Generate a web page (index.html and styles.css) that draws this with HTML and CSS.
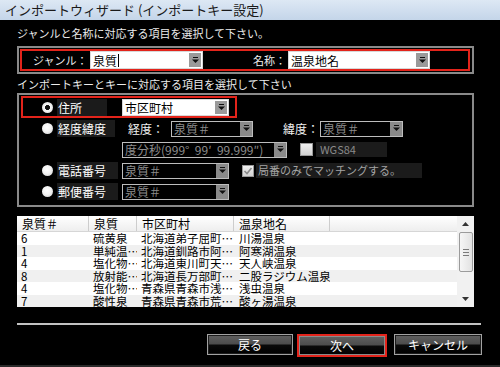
FILE: index.html
```html
<!DOCTYPE html>
<html lang="ja">
<head>
<meta charset="utf-8">
<title>インポートウィザード</title>
<link rel="stylesheet" href="styles.css">
</head>
<body>
<div class="window">
  <div class="titlebar">インポートウィザード (インポートキー設定)</div>
  <div class="main">
    <p class="caption cap1">ジャンルと名称に対応する項目を選択して下さい。</p>
    <div class="frame frame-top">
      <div class="hl">
        <span class="fld-label lbl-genre">ジャンル：</span>
        <div class="combo combo-white tall cw113">
          <span class="combo-text">泉質<span class="caret"></span></span>
          <span class="combo-btn"><svg viewBox="0 0 7 7" width="7" height="7"><rect x="1" y="0" width="5" height="1"/><path d="M0 2.5H7L3.5 6Z"/></svg></span>
        </div>
        <span class="fld-label lbl-name">名称：</span>
        <div class="combo combo-white tall cw142">
          <span class="combo-text">温泉地名</span>
          <span class="combo-btn"><svg viewBox="0 0 7 7" width="7" height="7"><rect x="1" y="0" width="5" height="1"/><path d="M0 2.5H7L3.5 6Z"/></svg></span>
        </div>
      </div>
    </div>
    <p class="caption cap2">インポートキーとキーに対応する項目を選択して下さい</p>
    <div class="frame group">
      <div class="opt first">
        <span class="radio on"></span>
        <span class="optcol"><span class="lbl w50">住所</span></span>
        <div class="combo combo-white cw107">
          <span class="combo-text">市区町村</span>
          <span class="combo-btn"><svg viewBox="0 0 7 7" width="7" height="7"><rect x="1" y="0" width="5" height="1"/><path d="M0 2.5H7L3.5 6Z"/></svg></span>
        </div>
      </div>
      <div class="opt">
        <span class="radio"></span>
        <span class="optcol"><span class="lbl w58">経度緯度</span></span>
        <span class="sub sub-lon">経度：</span>
        <div class="combo combo-dark cw82">
          <span class="combo-text">泉質＃</span>
          <span class="combo-btn"><svg viewBox="0 0 7 7" width="7" height="7"><rect x="1" y="0" width="5" height="1"/><path d="M0 2.5H7L3.5 6Z"/></svg></span>
        </div>
        <span class="sub sub-lat">緯度：</span>
        <div class="combo combo-dark cw83">
          <span class="combo-text">泉質＃</span>
          <span class="combo-btn"><svg viewBox="0 0 7 7" width="7" height="7"><rect x="1" y="0" width="5" height="1"/><path d="M0 2.5H7L3.5 6Z"/></svg></span>
        </div>
      </div>
      <div class="opt">
        <span class="spacer"></span>
        <div class="combo combo-dark cw165">
          <span class="combo-text">度分秒(999°&nbsp;&nbsp;99′&nbsp;&nbsp;99.999″)</span>
          <span class="combo-btn"><svg viewBox="0 0 7 7" width="7" height="7"><rect x="1" y="0" width="5" height="1"/><path d="M0 2.5H7L3.5 6Z"/></svg></span>
        </div>
        <span class="check big"></span>
        <span class="chklbl wgs">WGS84</span>
      </div>
      <div class="opt">
        <span class="radio"></span>
        <span class="optcol"><span class="lbl w61">電話番号</span></span>
        <div class="combo combo-dark cw107">
          <span class="combo-text">泉質＃</span>
          <span class="combo-btn"><svg viewBox="0 0 7 7" width="7" height="7"><rect x="1" y="0" width="5" height="1"/><path d="M0 2.5H7L3.5 6Z"/></svg></span>
        </div>
        <span class="check small"><svg viewBox="0 0 10 10" width="10" height="10"><path d="M1.5 5L4 7.5L8.5 2" fill="none" stroke="#8a8a8a" stroke-width="1.6"/></svg></span>
        <span class="chklbl local">局番のみでマッチングする。</span>
      </div>
      <div class="opt">
        <span class="radio"></span>
        <span class="optcol"><span class="lbl w61">郵便番号</span></span>
        <div class="combo combo-dark cw107">
          <span class="combo-text">泉質＃</span>
          <span class="combo-btn"><svg viewBox="0 0 7 7" width="7" height="7"><rect x="1" y="0" width="5" height="1"/><path d="M0 2.5H7L3.5 6Z"/></svg></span>
        </div>
      </div>
    </div>

    <div class="table">
      <div class="grid">
        <div class="thead">
          <span class="th">泉質＃</span>
          <span class="th">泉質</span>
          <span class="th">市区町村</span>
          <span class="th">温泉地名</span>
          <span class="th last"></span>
        </div>
        <div class="tbody">
          <div class="tr"><span class="td">6</span><span class="td">硫黄泉</span><span class="td">北海道弟子屈町…</span><span class="td c4">川湯温泉</span><span class="td"></span></div>
          <div class="tr"><span class="td">1</span><span class="td">単純温…</span><span class="td">北海道釧路市阿…</span><span class="td c4">阿寒湖温泉</span><span class="td"></span></div>
          <div class="tr"><span class="td">4</span><span class="td">塩化物…</span><span class="td">北海道東川町天…</span><span class="td c4">天人峡温泉</span><span class="td"></span></div>
          <div class="tr"><span class="td">8</span><span class="td">放射能…</span><span class="td">北海道長万部町…</span><span class="td c4">二股ラジウム温泉</span><span class="td"></span></div>
          <div class="tr"><span class="td">4</span><span class="td">塩化物…</span><span class="td">青森県青森市浅…</span><span class="td c4">浅虫温泉</span><span class="td"></span></div>
          <div class="tr"><span class="td">7</span><span class="td">酸性泉</span><span class="td">青森県青森市荒…</span><span class="td c4">酸ヶ湯温泉</span><span class="td"></span></div>
          <div class="tr"><span class="td">4</span><span class="td">塩化物…</span><span class="td">宮城県仙台市青…</span><span class="td c4">作並温泉</span><span class="td"></span></div>
        </div>
      </div>
      <div class="sb">
        <span class="sb-btn"><svg viewBox="0 0 7 4" width="7" height="4"><path d="M0 4H7L3.5 0Z"/></svg></span>
        <span class="thumb"><span class="grip"></span><span class="grip"></span><span class="grip"></span></span>
        <span class="sb-fill"></span>
        <span class="sb-btn"><svg viewBox="0 0 7 4" width="7" height="4"><path d="M0 0H7L3.5 4Z"/></svg></span>
      </div>
    </div>

    <div class="sep"></div>

    <div class="buttons">
      <button class="btn b-back">戻る</button>
      <button class="btn b-next">次へ</button>
      <button class="btn b-cancel">キャンセル</button>
    </div>
  </div>
</div>
</body>
</html>
```

FILE: styles.css
```css
* { box-sizing: border-box; }
html, body { margin: 0; padding: 0; }
body {
  background: #000;
  font-family: "Noto Sans CJK JP", "Noto Sans", sans-serif;
  color: #f0f0f0;
}
.window {
  width: 500px;
  height: 367px;
  overflow: hidden;
  border-bottom: 2px solid #2a2a2a;
}
.titlebar {
  height: 20px;
  line-height: 20px;
  padding-left: 5px;
  font-size: 13px;
  color: #1a1a1a;
  background: linear-gradient(#dde8f4, #c4d5e9);
  white-space: nowrap;
}
.main { padding-left: 17px; }
.caption {
  margin: 0;
  font-size: 11px;
  line-height: 14px;
  color: #ececec;
  white-space: nowrap;
}
.cap1 { margin-top: 6px; }
.cap2 { margin-top: 3px; }

.frame {
  width: 457px;
  border: 2px solid #8a8a8a;
}
.frame-top {
  margin-top: 6px;
  height: 28px;
  padding: 1px 2px 1px 1px;
}
.hl {
  height: 22px;
  border: 2px solid #e3241b;
  display: flex;
  align-items: center;
}
.fld-label {
  font-size: 11px;
  line-height: 14px;
  white-space: nowrap;
  color: #f0f0f0;
  flex: none;
}
.lbl-genre { width: 68px; padding-left: 11px; }
.lbl-name { width: 85px; padding-left: 50px; }

/* combos */
.combo {
  display: flex;
  align-items: center;
  flex: none;
  height: 17px;
  font-size: 12px;
}
.combo.tall { height: 18px; }
.combo-white { background: #fff; color: #000; border: 1px solid #d8d8d8; }
.combo-dark { background: #000; color: #8c8c8c; border: 1px solid #bdbdbd; height: 16px; }
.combo-text {
  flex: 1;
  padding-left: 2px;
  white-space: nowrap;
  overflow: hidden;
  line-height: 15px;
  display: flex;
  align-items: center;
}
.caret {
  display: inline-block;
  width: 1px;
  height: 13px;
  background: #000;
  margin-left: 1px;
}
.combo-btn {
  width: 12px;
  align-self: stretch;
  margin: 1px;
  background: #9a9a9a;
  display: flex;
  align-items: center;
  justify-content: center;
  flex: none;
}
.combo-dark .combo-btn { background: #8a8a8a; margin: 0; }
.combo-btn svg { fill: #111; }
.cw82 { width: 82px; }
.cw83 { width: 83px; }
.cw107 { width: 107px; }
.cw113 { width: 113px; }
.cw142 { width: 142px; }
.cw165 { width: 165px; }

/* option group */
.group {
  margin-top: 2px;
  height: 114px;
  padding: 1px 2px 3px 2px;
}
.opt {
  display: flex;
  align-items: center;
  height: 21px;
  border: 2px solid transparent;
  padding-left: 19px;
}
.opt.first {
  height: 22px;
  width: 216px;
  border-color: #e3241b;
}
.radio {
  width: 11px;
  height: 11px;
  border-radius: 50%;
  flex: none;
  background: radial-gradient(circle at 45% 40%, #ffffff 0%, #f3f3f3 45%, #c9c9c9 100%);
}
.radio.on {
  background: radial-gradient(circle, #111 0 2.2px, #fafafa 2.8px, #ececec 60%, #c9c9c9 100%);
}
.optcol { width: 65px; margin-left: 4px; flex: none; }
.lbl {
  display: block;
  height: 17px;
  line-height: 17px;
  background: #1b1b1b;
  font-size: 12px;
  color: #fff;
  padding-left: 1px;
  white-space: nowrap;
}
.w50 { width: 50px; }
.w58 { width: 58px; }
.w61 { width: 61px; }
.sub {
  font-size: 12px;
  color: #f0f0f0;
  white-space: nowrap;
  flex: none;
}
.sub-lon { width: 49px; padding-left: 6px; }
.sub-lat { width: 37px; margin-left: 30px; }
.spacer { width: 80px; flex: none; }
.check {
  flex: none;
  margin-left: 13px;
  background: linear-gradient(#f0f0f0, #d2d2d2);
  border: 1px solid #9a9a9a;
  display: flex;
  align-items: center;
  justify-content: center;
}
.check.big { width: 13px; height: 13px; }
.check.small { width: 12px; height: 12px; }
.chklbl {
  flex: none;
  height: 15px;
  line-height: 15px;
  background: #1b1b1b;
  font-size: 11px;
  white-space: nowrap;
}
.wgs { width: 71px; margin-left: 3px; padding-left: 4px; color: #8a8a8a; }
.local { width: 166px; margin-left: 2px; padding-left: 2px; color: #a4a4a4; }

/* table */
.table {
  margin-top: 9px;
  width: 457px;
  height: 91px;
  display: flex;
  background: #fff;
  overflow: hidden;
}
.grid { flex: 1; overflow: hidden; }
.thead, .tr {
  display: grid;
  grid-template-columns: 72px 48px 97px 96px 1fr;
}
.thead {
  height: 16px;
  background: linear-gradient(#ffffff, #eeeeee);
  border-bottom: 1px solid #d6d6d6;
  font-size: 12px;
  line-height: 15px;
  color: #000;
}
.th {
  border-right: 1px solid #cdcdcd;
  padding-left: 5px;
  white-space: nowrap;
  overflow: hidden;
}
.th.last { border-right: none; }
.tr {
  height: 12.5px;
  font-size: 11.5px;
  line-height: 12.5px;
  color: #000;
}
.tr:nth-child(even) { background: #f0f0f0; }
.td {
  padding-left: 4px;
  white-space: nowrap;
  overflow: hidden;
}
.td.c4 { padding-left: 5px; }

.sb {
  width: 17px;
  flex: none;
  background: #f1f1f1;
  display: flex;
  flex-direction: column;
  align-items: center;
}
.sb-btn {
  height: 16px;
  width: 17px;
  display: flex;
  align-items: center;
  justify-content: center;
}
.sb-btn svg { fill: #333; }
.thumb {
  width: 14px;
  height: 40px;
  border: 1px solid #9b9b9b;
  border-radius: 2px;
  background: linear-gradient(90deg, #f6f6f6, #e2e2e2);
  display: flex;
  flex-direction: column;
  align-items: center;
  justify-content: center;
  gap: 2px;
}
.grip { width: 6px; height: 1px; background: #7a7a7a; }
.sb-fill { flex: 1; }

.sep {
  margin-top: 16px;
  width: 464px;
  height: 2px;
  background: #c2c2c2;
}

.buttons {
  margin-top: 9px;
  display: flex;
  align-items: flex-start;
  padding-left: 190px;
}
.btn {
  height: 21px;
  padding: 0;
  font-family: "Noto Sans CJK JP", "Noto Sans", sans-serif;
  font-size: 12px;
  line-height: 17px;
  color: #fff;
  border: 1px solid #a2a2a2;
  background: linear-gradient(#606060 0%, #4c4c4c 48%, #0a0a0a 52%, #000 100%);
  box-shadow: inset 0 0 0 1px #1c1c1c;
}
.b-back { width: 86px; }
.b-next {
  width: 90px;
  height: 23px;
  margin-left: 4px;
  border: 2px solid #e3241b;
  box-shadow: inset 0 0 0 1px #8a8a8a;
}
.b-cancel { width: 88px; margin-left: 7px; }
```
